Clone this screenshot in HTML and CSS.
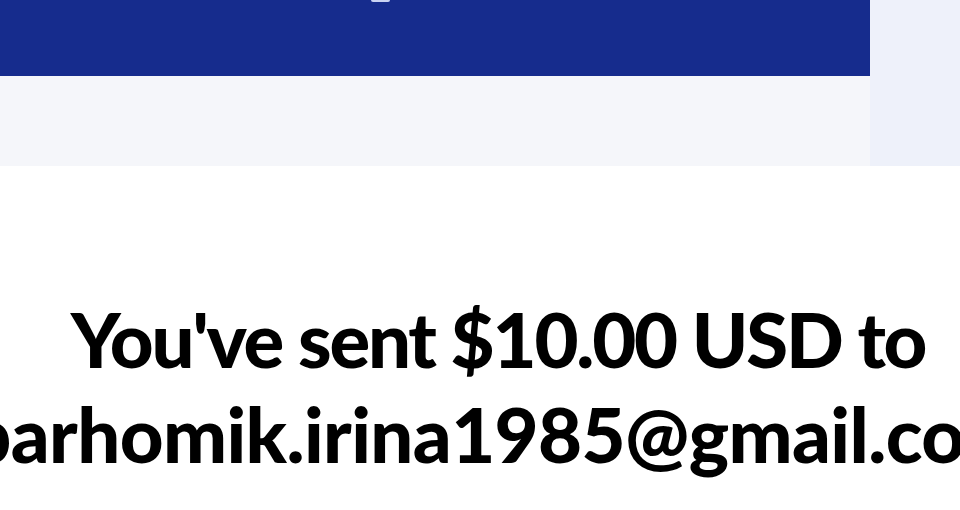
FILE: index.html
```html
<!DOCTYPE html>
<html lang="en">
<head>
    <meta charset="UTF-8">
    <meta name="viewport" content="width=device-width, initial-scale=1.0">
    <title>Payment sent</title>
    <link rel="stylesheet" href="styles.css">
</head>
<body>
    <div class="top">
        <div class="main-col">
            <div class="banner">
                <span class="banner-mark"></span>
            </div>
            <div class="subbar"></div>
        </div>
        <div class="side-col"></div>
    </div>

    <div class="result">
        <h1 class="result-title">
            <span class="line">You've sent $10.00 USD to</span>
            <span class="line email">parhomik.irina1985@gmail.com</span>
        </h1>
    </div>
</body>
</html>
```

FILE: styles.css
```css
:root {
    --brand: #162c8d;
    --sub-bg: #f5f6fa;
    --side-bg: #eef1fa;
    --text: #000;
}

body {
    margin: 0;
    background: #fff;
    font-family: Lato, "Noto Sans", sans-serif;
    color: var(--text);
    overflow: hidden;
}

.top {
    display: flex;
    height: 166px;
}

.main-col {
    width: 870px;
    display: flex;
    flex-direction: column;
}

.side-col {
    flex: 1;
    background: var(--side-bg);
}

.banner {
    height: 76px;
    background: var(--brand);
    padding-left: 371px;
}

.banner-mark {
    display: block;
    width: 19px;
    height: 2px;
    background: #c9d3f2;
    border-radius: 0 0 2px 2px;
}

.subbar {
    flex: 1;
    background: var(--sub-bg);
}

.result {
    width: 960px;
    box-sizing: border-box;
    padding-left: 36px;
    padding-top: 125px;
}

.result-title {
    margin: 0;
    display: flex;
    flex-direction: column;
    align-items: center;
    font-size: 76px;
    font-weight: 900;
    line-height: 95px;
    letter-spacing: -2.2px;
}

.line {
    white-space: nowrap;
}

.email {
    letter-spacing: -0.6px;
}
```
